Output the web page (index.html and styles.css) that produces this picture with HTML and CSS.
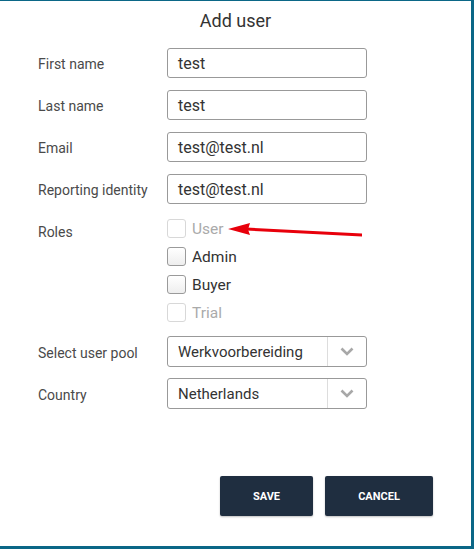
FILE: index.html
```html
<!DOCTYPE html>
<html>
<head>
<meta charset="utf-8">
<link rel="stylesheet" href="styles.css">
</head>
<body>
<div class="panel">
  <h1 class="title">Add user</h1>
  <div class="form">
    <div class="row"><label class="lbl">First name</label><div class="input">test</div></div>
    <div class="row"><label class="lbl">Last name</label><div class="input">test</div></div>
    <div class="row"><label class="lbl">Email</label><div class="input">test@test.nl</div></div>
    <div class="row"><label class="lbl">Reporting identity</label><div class="input">test@test.nl</div></div>
    <div class="row roles-row">
      <label class="lbl roles-lbl">Roles</label>
      <div class="roles">
        <div class="check disabled"><span class="box"></span>User</div>
        <div class="check"><span class="box"></span>Admin</div>
        <div class="check"><span class="box"></span>Buyer</div>
        <div class="check disabled"><span class="box"></span>Trial</div>
      </div>
    </div>
    <div class="row"><label class="lbl">Select user pool</label>
      <div class="select"><span class="val">Werkvoorbereiding</span><span class="caret"><svg width="14" height="9" viewBox="0 0 14 9"><path d="M1.5 1.5 L7 7 L12.5 1.5" fill="none" stroke="#a8a8a8" stroke-width="2.6"/></svg></span></div>
    </div>
    <div class="row country-row"><label class="lbl">Country</label>
      <div class="select"><span class="val">Netherlands</span><span class="caret"><svg width="14" height="9" viewBox="0 0 14 9"><path d="M1.5 1.5 L7 7 L12.5 1.5" fill="none" stroke="#a8a8a8" stroke-width="2.6"/></svg></span></div>
    </div>
  </div>
  <div class="actions">
    <button class="btn save">SAVE</button>
    <button class="btn cancel">CANCEL</button>
  </div>
  <svg class="arrow" width="150" height="20" viewBox="0 0 150 20">
    <path d="M18 7.5 L134 13.5 L134 16.5 L18 10.5 Z" fill="#e8000b"/>
    <path d="M0 9 L22 3 L20 9.5 L22 15 Z" fill="#e8000b"/>
  </svg>
</div>
</body>
</html>
```
FILE: styles.css
```css
html, body { margin: 0; padding: 0; }
body {
  background: #0b6787;
  width: 474px;
  height: 549px;
  overflow: hidden;
  font-family: Roboto, "Liberation Sans", sans-serif;
}
.panel {
  position: relative;
  margin-top: 1px;
  width: 471px;
  height: 545px;
  background: #fff;
  box-sizing: border-box;
}
.title {
  margin: 0;
  padding-top: 9px;
  height: 39px;
  box-sizing: border-box;
  text-align: center;
  font-size: 18px;
  font-weight: 400;
  color: #333;
  line-height: 22px;
}
.form {
  display: flex;
  flex-direction: column;
  gap: 12px;
  padding-left: 38px;
  padding-top: 8px;
}
.row {
  display: flex;
  align-items: center;
}
.lbl {
  width: 129px;
  font-size: 14px;
  color: #4a4a4a;
  padding-top: 2px;
}
.input {
  width: 200px;
  height: 30px;
  box-sizing: border-box;
  border: 1px solid #999;
  border-radius: 3px;
  padding-left: 10px;
  padding-top: 2px;
  font-size: 16px;
  color: #333;
  line-height: 26px;
}
.roles-row { align-items: flex-start; margin-top: 3px; margin-bottom: 2px; }
.roles-lbl { padding-top: 5px; }
.roles {
  display: flex;
  flex-direction: column;
  gap: 9px;
}
.check {
  display: flex;
  align-items: center;
  height: 19px;
  font-size: 15.5px;
  color: #333;
}
.box {
  width: 19px;
  height: 19px;
  box-sizing: border-box;
  border: 1px solid #9a9a9a;
  border-radius: 3px;
  margin-right: 6px;
  background: linear-gradient(#fff, #eee);
}
.check.disabled { color: #aaa; }
.check.disabled .box { border-color: #d8d8d8; background: #fff; }
.country-row { margin-top: -1px; }
.select {
  display: flex;
  width: 200px;
  height: 31px;
  box-sizing: border-box;
  border: 1px solid #999;
  border-radius: 3px;
  font-size: 15px;
  color: #333;
}
.select .val {
  flex: 1;
  padding-left: 10px;
  padding-top: 1px;
  line-height: 28px;
  border-right: 1px solid #ddd;
}
.select .caret {
  width: 38px;
  display: flex;
  align-items: center;
  justify-content: center;
}
.actions {
  display: flex;
  gap: 12px;
  padding-left: 220px;
  margin-top: 67px;
}
.btn {
  height: 40px;
  border: 0;
  border-radius: 2px;
  background: #1f2e40;
  color: #fff;
  font-family: Roboto, "Liberation Sans", sans-serif;
  font-weight: 700;
  font-size: 11px;
  box-shadow: 0 1px 2px rgba(0,0,0,0.25);
  padding: 0;
}
.save { width: 93px; }
.cancel { width: 108px; }
.arrow {
  position: absolute;
  left: 228px;
  top: 219px;
}
```
